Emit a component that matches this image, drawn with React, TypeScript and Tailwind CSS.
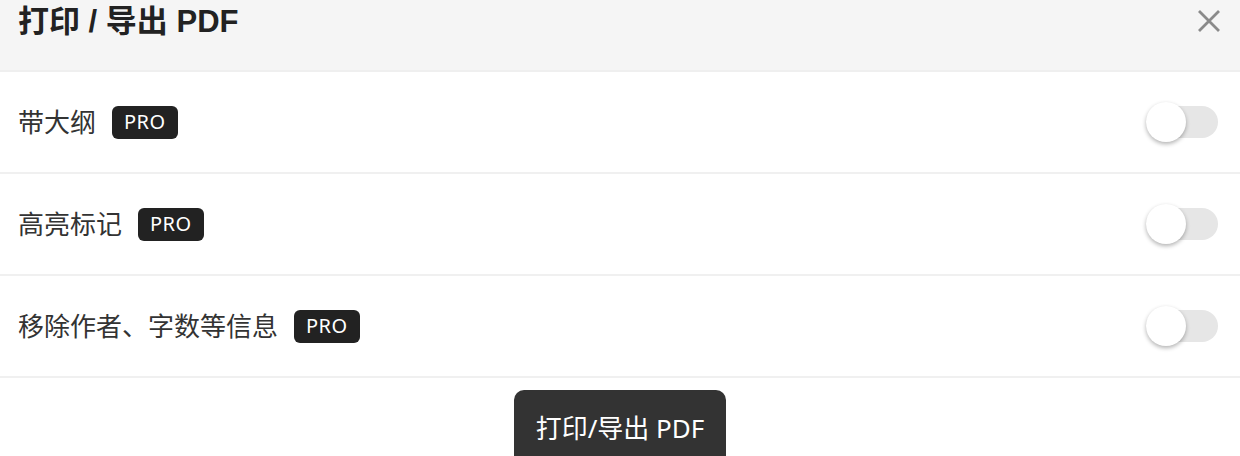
import React from "react";

const font = { fontFamily: '"Noto Sans", "Noto Sans CJK SC", sans-serif' };

function Toggle() {
  return (
    <div className="relative w-[72px] h-[40px] flex items-center">
      <div className="w-[72px] h-[32px] rounded-full bg-[#e6e6e6]" />
      <div className="absolute left-0 top-0 w-[40px] h-[40px] rounded-full bg-white shadow-[0_2px_4px_rgba(0,0,0,0.3)]" />
    </div>
  );
}

function Row({ label }: { label: string }) {
  return (
    <div className="h-[102px] border-b-2 border-[#f0f0f0] flex items-center justify-between pl-[18px] pr-[22px]">
      <div className="flex items-center gap-[16px]">
        <span className="text-[26px] text-[#333]">{label}</span>
        <span className="h-[33px] px-[12px] rounded-[6px] bg-[#222] text-white text-[20px] flex items-center tracking-[0.5px]">PRO</span>
      </div>
      <Toggle />
    </div>
  );
}

export default function App() {
  return (
    <div className="w-[1240px] h-[456px] overflow-hidden bg-white" style={font}>
      <div className="h-[72px] bg-[#f5f5f5] border-b-2 border-[#efefef] flex items-start justify-between pl-[18px] pr-[18px]">
        <div className="text-[31px] font-bold text-[#222] leading-[44px] font-['Liberation_Sans','Noto_Sans_CJK_SC',sans-serif]">打印 / 导出 PDF</div>
        <svg width="26" height="26" viewBox="0 0 26 26" className="mt-[8px]">
          <path d="M3 3 L23 23 M23 3 L3 23" stroke="#8a8a8a" strokeWidth="2.8" />
        </svg>
      </div>
      <Row label="带大纲" />
      <Row label="高亮标记" />
      <Row label="移除作者、字数等信息" />
      <div className="flex justify-center pt-[12px]">
        <div className="h-[78px] px-[22px] rounded-[10px] bg-[#333] text-white text-[26px] flex items-start pt-[19px]">打印/导出 PDF</div>
      </div>
    </div>
  );
}
